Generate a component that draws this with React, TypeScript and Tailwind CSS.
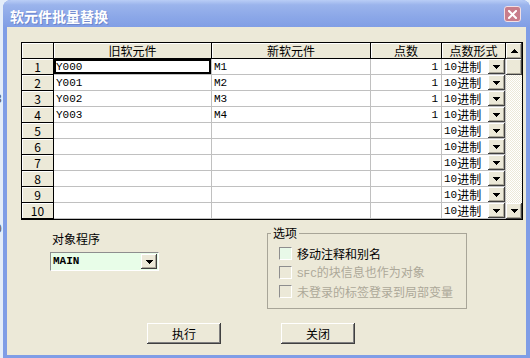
import React from 'react';

const cjk = "font-['Noto_Sans_CJK_SC',sans-serif]";
const mono = "font-['Liberation_Mono','Noto_Sans_CJK_SC',monospace]";
const raised =
    'bg-[#ece9d8] shadow-[inset_-1px_-1px_0_#404040,inset_1px_1px_0_#ffffff,inset_-2px_-2px_0_#aca899]';

const ROWS = Array.from({ length: 10 }, (_, i) => ({
    n: i + 1,
    oldDev: i < 4 ? `Y00${i}` : '',
    newDev: i < 4 ? `M${i + 1}` : '',
    points: i < 4 ? '1' : '',
}));

function Tri({ up = false }: { up?: boolean }) {
    return (
        <svg width="7" height="4" viewBox="0 0 7 4" shapeRendering="crispEdges">
            <path d={up ? 'M0 4h7L3.5 0z' : 'M0 0h7L3.5 4z'} fill="#000" />
        </svg>
    );
}

function ArrowButton({ up = false, className = '' }: { up?: boolean; className?: string }) {
    return (
        <div className={`flex items-center justify-center ${raised} ${className}`}>
            <Tri up={up} />
        </div>
    );
}

function Check({ label, disabled = false }: { label: React.ReactNode; disabled?: boolean }) {
    return (
        <div className="flex items-center h-[19px] pl-[11px]">
            <div
                className={`w-[13px] h-[13px] border border-t-[#8e8e8e] border-l-[#8e8e8e] border-b-white border-r-white ${
                    disabled ? 'bg-[#ece9d8]' : 'bg-[#e8f9e8]'
                }`}
            />
            <span
                className={`ml-[5px] text-[12px] leading-[14px] ${cjk} ${
                    disabled ? 'text-[#aca899]' : 'text-black'
                }`}
            >
                {label}
            </span>
        </div>
    );
}

export default function App() {
    const head = `h-[16px] bg-[#ece9d8] border-r border-b border-black shadow-[inset_1px_1px_0_#ffffff] flex items-center justify-center text-[12px] leading-[14px] ${cjk}`;
    const cell = `h-[16px] bg-white border-r border-b border-[#c0c0c0] flex items-center text-[11px] leading-[14px] ${mono}`;

    return (
        <div className="w-[530px] h-[358px] flex overflow-hidden bg-[#e4edf9]">
            {/* what shows of the window behind */}
            <div className="w-[3px] flex flex-col overflow-hidden text-[12px] leading-[14px] text-[#555] font-['Liberation_Sans',sans-serif]">
                <span className="mt-[92px] -ml-[5px]">3</span>
                <span className="mt-[116px] -ml-[5px]">0</span>
                <span className="mt-[106px] -ml-[4px]">/</span>
            </div>

            {/* dialog */}
            <div className="flex-1 flex flex-col rounded-t-[8px] overflow-hidden bg-[#7f9de6]">
                {/* title bar */}
                <div className="h-[27px] flex items-start bg-[linear-gradient(180deg,#b9cdf6_0%,#9bb4ec_18%,#8ca8e8_60%,#819ee5_100%)]">
                    <span
                        className={`mt-[8px] pl-[7px] text-[14px] leading-[16px] font-bold text-white [text-shadow:1px_1px_0_#7088cc] ${cjk}`}
                    >
                        软元件批量替换
                    </span>
                    <div className="ml-auto mt-[6px] mr-[9px] w-[17px] h-[16px] rounded-[3px] border border-[#f2dfe4] bg-[#c87d8b] flex items-center justify-center">
                        <svg width="9" height="9" viewBox="0 0 9 9">
                            <path d="M1 1L8 8M8 1L1 8" stroke="#fff" strokeWidth="2" strokeLinecap="square" />
                        </svg>
                    </div>
                </div>

                <div className="flex-1 flex px-[4px] pb-[3px]">
                    <div className="flex-1 flex flex-col bg-[#ece9d8]">
                        {/* grid */}
                        <div className="mt-[15px] ml-[14px] w-[502px] flex border border-black">
                            <div className="grid grid-cols-[32px_158px_159px_71px_64px]">
                                <div className={head} />
                                <div className={head}>旧软元件</div>
                                <div className={head}>新软元件</div>
                                <div className={head}>点数</div>
                                <div className={head}>点数形式</div>
                                {ROWS.map((r) => (
                                    <React.Fragment key={r.n}>
                                        <div className={`${head} ${mono} text-[12px]`}>{r.n}</div>
                                        <div
                                            className={`${cell} px-[2px] ${
                                                r.n === 1 ? 'shadow-[inset_0_0_0_2px_#000]' : ''
                                            }`}
                                        >
                                            {r.oldDev}
                                        </div>
                                        <div className={`${cell} px-[2px]`}>{r.newDev}</div>
                                        <div className={`${cell} justify-end pr-[3px]`}>{r.points}</div>
                                        <div className={`${cell} justify-between pl-[2px]`}>
                                            <span className="flex items-center h-[14px]">
                                                10
                                                <span className={`inline-block h-[14px] text-[12px] leading-[14px] ${cjk}`}>
                                                    进制
                                                </span>
                                            </span>
                                            <ArrowButton className="w-[17px] h-[15px]" />
                                        </div>
                                    </React.Fragment>
                                ))}
                            </div>
                            {/* vertical scrollbar */}
                            <div className="w-[16px] flex flex-col">
                                <ArrowButton up className="h-[16px]" />
                                <div className={`h-[16px] ${raised}`} />
                                <div className="flex-1 bg-[repeating-conic-gradient(#ece9d8_0_25%,#ffffff_0_50%)] bg-[length:2px_2px]" />
                                <ArrowButton className="h-[16px]" />
                            </div>
                        </div>

                        {/* target program + options */}
                        <div className="mt-[6px] flex items-start">
                            <div className="ml-[43px] w-[109px] pt-[6px] flex flex-col">
                                <div className={`pl-[2px] text-[12px] leading-[14px] ${cjk}`}>对象程序</div>
                                <div className="mt-[6px] h-[19px] flex items-center bg-[#e8fde8] border border-t-[#8e8e8e] border-l-[#8e8e8e] border-b-white border-r-white">
                                    <span className={`pl-[2px] text-[11px] font-bold ${mono}`}>MAIN</span>
                                    <ArrowButton className="ml-auto mr-[1px] w-[16px] h-[15px]" />
                                </div>
                            </div>

                            <fieldset className="ml-[108px] w-[200px] pt-[4px] pb-[7px] border border-[#a8a598]">
                                <legend className={`ml-[3px] px-[2px] text-[12px] leading-[14px] ${cjk}`}>选项</legend>
                                <Check label="移动注释和别名" />
                                <Check
                                    disabled
                                    label={
                                        <>
                                            <span className={`text-[11px] ${mono}`}>SFC</span>的块信息也作为对象
                                        </>
                                    }
                                />
                                <Check disabled label="未登录的标签登录到局部变量" />
                            </fieldset>
                        </div>

                        {/* buttons */}
                        <div className="mt-[14px] ml-[140px] flex gap-[60px]">
                            <button
                                className={`w-[74px] h-[21px] text-[12px] ${cjk} bg-[#ece9d8] shadow-[inset_-1px_-1px_0_#404040,inset_1px_1px_0_#ffffff,inset_-2px_-2px_0_#808080]`}
                            >
                                执行
                            </button>
                            <button
                                className={`w-[74px] h-[21px] text-[12px] ${cjk} bg-[#ece9d8] shadow-[inset_-1px_-1px_0_#404040,inset_1px_1px_0_#ffffff,inset_-2px_-2px_0_#808080]`}
                            >
                                关闭
                            </button>
                        </div>
                    </div>
                </div>
            </div>
        </div>
    );
}
